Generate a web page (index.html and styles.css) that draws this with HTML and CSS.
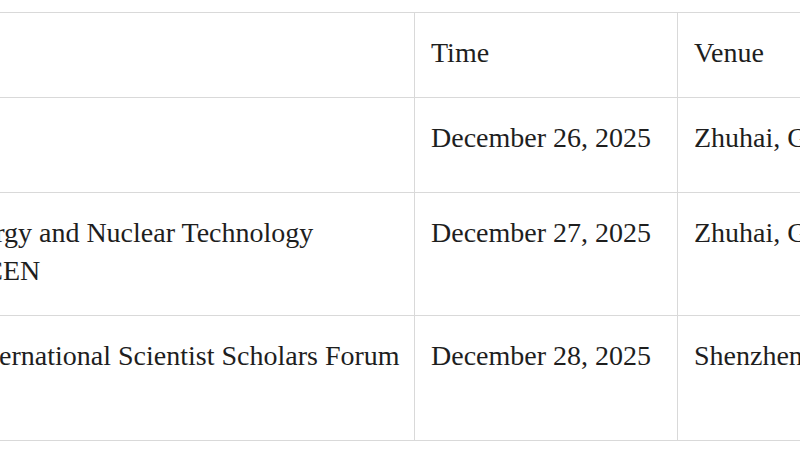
FILE: index.html
```html
<!DOCTYPE html>
<html lang="en">
<head>
<meta charset="utf-8">
<title>Schedule</title>
<link rel="stylesheet" href="styles.css">
</head>
<body>
<div class="page">
  <table class="schedule">
    <colgroup>
      <col class="col-event">
      <col class="col-time">
      <col class="col-venue">
    </colgroup>
    <tr class="row-head">
      <td>Event</td>
      <td>Time</td>
      <td>Venue</td>
    </tr>
    <tr class="row-a">
      <td>Opening</td>
      <td>December 26, 2025</td>
      <td>Zhuhai, Guangdong</td>
    </tr>
    <tr class="row-b">
      <td><div>Nuclear Energy and Nuclear Technology</div><div>Meeting ICCEN</div></td>
      <td>December 27, 2025</td>
      <td>Zhuhai, Guangdong</td>
    </tr>
    <tr class="row-c">
      <td>Bay Area International Scientist Scholars Forum</td>
      <td>December 28, 2025</td>
      <td>Shenzhen, Guangdong</td>
    </tr>
  </table>
</div>
</body>
</html>
```
FILE: styles.css
```css
html, body {
  margin: 0;
  padding: 0;
  background: #ffffff;
  overflow: hidden;
}
.page {
  padding-top: 12px;
  width: 800px;
  height: 450px;
  overflow: hidden;
  box-sizing: border-box;
}
.schedule {
  margin-left: -161px;
  border-collapse: collapse;
  table-layout: fixed;
  width: 1140px;
  font-family: "Liberation Serif", "Times New Roman", serif;
  font-size: 28px;
  line-height: 38px;
  color: #1e1e1e;
}
.col-event { width: 575px; }
.col-time { width: 263px; }
.col-venue { width: 302px; }
.schedule td {
  border: 1px solid #d9d9d9;
  padding: 21px 16px 0 16px;
  vertical-align: top;
  white-space: nowrap;
  overflow: hidden;
}
.row-head { height: 85px; }
.row-a { height: 95px; }
.row-b { height: 123px; }
.row-c { height: 125px; }
```
